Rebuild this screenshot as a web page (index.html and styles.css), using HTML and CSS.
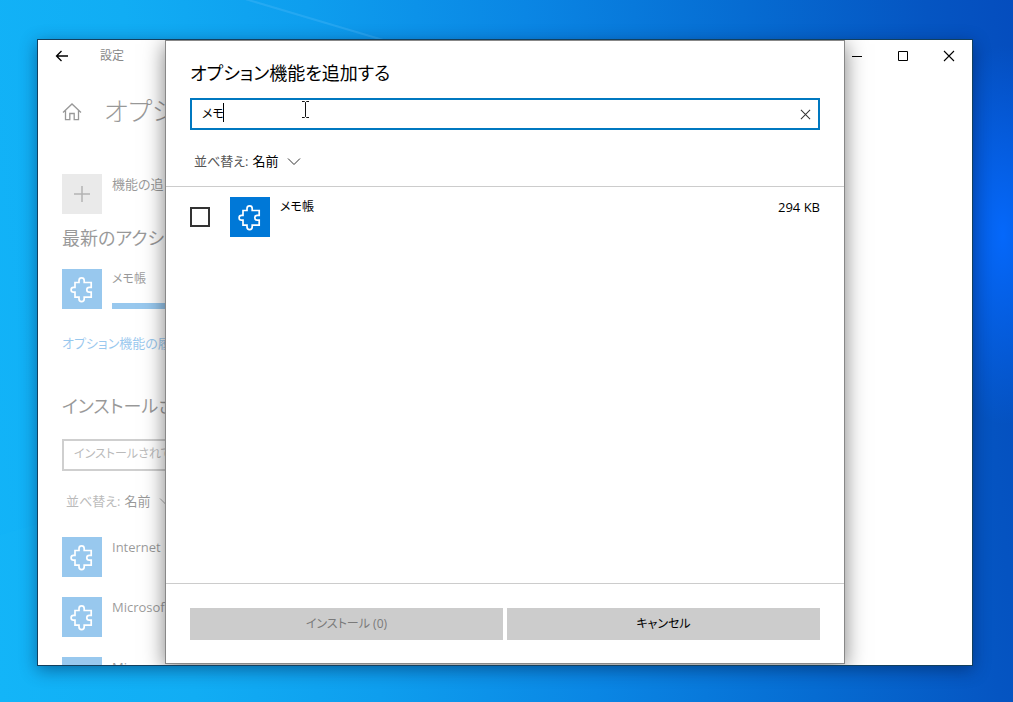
FILE: index.html
```html
<!DOCTYPE html>
<html lang="ja">
<head>
<meta charset="utf-8">
<meta name="viewport" content="width=device-width, initial-scale=1">
<title>設定</title>
<link rel="stylesheet" href="styles.css">
</head>
<body>
<svg class="defs" width="0" height="0" aria-hidden="true">
  <symbol id="puzzle" viewBox="0 0 40 40">
    <path d="M13 13.500H17V11.500a2.600 2.600 0 0 1 5.200 0v2h7v4.800h-2a2.400 2.400 0 0 0 0 4.800h2v5h-7v2a2.600 2.600 0 0 1-5.200 0v-2H13v-5h-1.500a2.400 2.400 0 0 1 0-4.800H13z" fill="none" stroke="currentColor" stroke-width="1.700"/>
  </symbol>
  <symbol id="chevron" viewBox="0 0 14 14">
    <path d="M1 4.500l6 6 6-6" fill="none" stroke="currentColor" stroke-width="1"/>
  </symbol>
  <symbol id="cross" viewBox="0 0 12 12">
    <path d="M1 1l10 10M11 1L1 11" fill="none" stroke="currentColor" stroke-width="1.100"/>
  </symbol>
</svg>
<div class="desktop">
  <svg class="rays" viewBox="0 0 1013 702" preserveAspectRatio="none" aria-hidden="true">
    <path d="M235 -4L400 45" stroke="#58bdf8" stroke-opacity=".3" stroke-width="2"/>
    <path d="M0 535L40 523V702H0z" fill="#19c0ff" fill-opacity=".1"/>
  </svg>
  <main class="window">
    <header class="titlebar">
      <button class="back" aria-label="戻る"><svg width="14" height="12" viewBox="0 0 14 12"><path d="M13 6H1.500M6.500 1l-5 5 5 5" fill="none" stroke="currentColor" stroke-width="1.300"/></svg></button>
      <span class="app-name">設定</span>
      <div class="controls">
        <button aria-label="最小化"><svg width="10" height="10"><path d="M0 5.500h10" stroke="currentColor"/></svg></button>
        <button aria-label="最大化"><svg width="10" height="10"><path d="M.5.5h9v9h-9z" fill="none" stroke="currentColor"/></svg></button>
        <button aria-label="閉じる"><svg width="12" height="12"><use href="#cross"/></svg></button>
      </div>
    </header>
    <section class="page">
      <div class="page-head">
        <svg width="20" height="20" viewBox="0 0 20 20"><path d="M1 11.500L10 3l9 8.500M3.500 9.500v9.200h4.300v-6.200h4.400v6.200h4.300V9.500" fill="none" stroke="currentColor" stroke-width="1.300"/></svg>
        <h1>オプシ</h1>
      </div>
      <button class="feature add-feature">
        <span class="tile plus"><svg width="16" height="16"><path d="M8 0v16M0 8h16" stroke="currentColor" stroke-width="1.500"/></svg></span>
        <span class="name">機能の追</span>
      </button>
      <h2>最新のアクシ</h2>
      <div class="feature recent">
        <span class="tile"><svg width="40" height="40"><use href="#puzzle"/></svg></span>
        <div class="progress-col"><span class="name">メモ帳</span><div class="bar"></div></div>
      </div>
      <a class="history" href="#">オプション機能の履</a>
      <h2 class="installed">インストールされ</h2>
      <input class="search muted" type="text" aria-label="検索" placeholder="インストールされて">
      <div class="sort">
        <label for="sort-page">並べ替え:</label>
        <select id="sort-page"><option>名前</option></select>
        <svg width="14" height="14"><use href="#chevron"/></svg>
      </div>
      <ul class="features">
        <li class="feature"><span class="tile"><svg width="40" height="40"><use href="#puzzle"/></svg></span><span class="name">Internet E</span></li>
        <li class="feature"><span class="tile"><svg width="40" height="40"><use href="#puzzle"/></svg></span><span class="name">Microsof</span></li>
        <li class="feature"><span class="tile"><svg width="40" height="40"><use href="#puzzle"/></svg></span><span class="name">Micros</span></li>
      </ul>
    </section>
    <div class="dialog" role="dialog" aria-labelledby="dialog-title">
      <div class="dialog-head">
        <h2 id="dialog-title">オプション機能を追加する</h2>
        <div class="search-box">
          <input class="search" type="text" aria-labelledby="dialog-title" value="メモ">
          <span class="caret"></span>
          <svg class="pointer" width="9" height="17" viewBox="0 0 9 17"><path d="M1 .5h2.500l1 1 1-1H8M4.500 1.500v14M1 16.500h2.500l1-1 1 1H8" fill="none" stroke="#111"/></svg>
          <button class="clear" aria-label="クリア"><svg width="11" height="11"><use href="#cross"/></svg></button>
        </div>
        <div class="sort">
          <label for="sort-dialog">並べ替え:</label>
          <select id="sort-dialog"><option>名前</option></select>
          <svg width="14" height="14"><use href="#chevron"/></svg>
        </div>
      </div>
      <div class="results">
        <div class="feature result">
          <input type="checkbox" id="memo">
          <span class="tile"><svg width="40" height="40"><use href="#puzzle"/></svg></span>
          <label class="name" for="memo">メモ帳</label>
          <span class="name size">294 KB</span>
        </div>
      </div>
      <footer class="actions">
        <button disabled>インストール (0)</button>
        <button>キャンセル</button>
      </footer>
    </div>
  </main>
</div>
</body>
</html>
```

FILE: styles.css
```css
* { box-sizing: border-box; }

body {
  margin: 0;
  font: 13px/20px "Open Sans", "Noto Sans CJK JP", sans-serif;
  font-feature-settings: "palt";
  color: #000;
}

button, input, select {
  font: inherit;
  font-feature-settings: inherit;
  color: inherit;
  border: 0;
  border-radius: 0;
  background: none;
  padding: 0;
  margin: 0;
}

h1, h2, ul { margin: 0; padding: 0; font-weight: 400; }
ul { list-style: none; }
svg { display: block; flex: none; }
.defs { position: absolute; }

.desktop {
  position: relative;
  height: 100vh;
  padding: 39px 40px 36px 37px;
  overflow: hidden;
  background:
    radial-gradient(ellipse 70px 190px at 99% 235px, #0568fb 0%, rgba(5, 104, 251, 0) 100%),
    linear-gradient(84deg, #12b4f8 0%, #11adf4 18%, #0e9eee 35%, #0a86e4 55%, #066cd2 75%, #0555c2 92%, #054dbe 100%);
}

.rays { position: absolute; inset: 0; width: 100%; height: 100%; }

.window {
  position: relative;
  height: 100%;
  overflow: hidden;
  background: #fff;
  border: 1px solid #12405f;
  box-shadow: 0 4px 16px rgba(0, 20, 60, .45);
}

.titlebar { display: flex; align-items: center; height: 32px; }
.titlebar button { display: grid; place-items: center; width: 46px; height: 32px; }
.titlebar .back { width: 48px; }
.app-name { margin-left: 14px; font-size: 12px; color: #888; }
.controls { display: flex; margin-left: auto; }

.page { max-width: 700px; padding: 0 24px; opacity: .4; }
.page-head { display: flex; align-items: center; gap: 22px; height: 40px; margin: 19px 0 43px; }
.page-head h1 { font-size: 26px; font-weight: 300; line-height: 40px; }

.feature { display: flex; align-items: flex-start; gap: 10px; height: 40px; }
.tile {
  display: grid;
  place-items: center;
  flex: none;
  width: 40px;
  height: 40px;
  color: #fff;
  background: #0078d7;
}
.tile.plus { color: #444; background: #ccc; }
.name { line-height: 20px; white-space: nowrap; }
.recent .name, label.name { font-size: 12px; }

.page h2 { font-size: 18px; line-height: 28px; margin: 10px 0 17px; }
.progress-col { flex: 1; }
.progress-col .name { display: block; }
.bar { height: 6px; margin-top: 14px; background: #0078d7; }
.history { display: block; margin: 24px 0 39px; color: #0078d7; text-decoration: none; }
.page .installed { margin: 0 0 19px; }

.search {
  display: block;
  width: 100%;
  height: 32px;
  padding: 0 10px 3px;
  border: 2px solid #0078c0;
  background: #fff;
  outline: 0;
  font-size: 12px;
}
.search.muted { border-color: #888; }
.search::placeholder { color: #555; opacity: 1; }

.sort { display: flex; align-items: center; gap: 4px; height: 20px; padding-left: 4px; }
.sort label { color: #555; }
.sort select { appearance: none; height: 20px; }
.sort svg { margin-left: 4px; color: #333; }
.page .sort { margin: 20px 0 26px; }
.features { display: grid; gap: 20px; }

/* Dialog laid over the dimmed settings page */
.dialog {
  position: absolute;
  inset: 0 0 1px;
  display: flex;
  flex-direction: column;
  width: 680px;
  max-width: 100%;
  margin: 0 auto;
  background: #fff;
  border: 1px solid #888;
  box-shadow: 0 4px 20px rgba(0, 0, 0, .5);
}
.dialog-head { padding: 18px 24px 15px; border-bottom: 1px solid #ccc; }
.dialog-head h2 { font-size: 18px; line-height: 28px; margin-bottom: 11px; }
.dialog-head .sort { margin-top: 21px; }

.search-box { position: relative; }
.caret { position: absolute; left: 33px; top: 5px; width: 1px; height: 19px; background: #000; }
.pointer { position: absolute; left: 111px; top: 3px; }
.clear { position: absolute; right: 2px; top: 2px; display: grid; place-items: center; width: 26px; height: 28px; color: #333; }

.results { flex: 1; padding: 10px 24px; }
.result input {
  appearance: none;
  align-self: center;
  width: 20px;
  height: 20px;
  margin-right: 10px;
  border: 2px solid #333;
}
.size { margin-left: auto; }

.actions {
  display: grid;
  grid-template-columns: 1fr 1fr;
  gap: 4px;
  padding: 24px 24px 23px;
  border-top: 1px solid #ccc;
}
.actions button { height: 32px; background: #ccc; font-size: 12px; }
.actions button:disabled { color: #7a7a7a; }
```
